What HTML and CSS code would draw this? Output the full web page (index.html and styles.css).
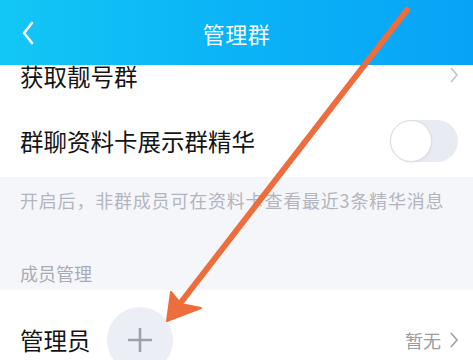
FILE: index.html
```html
<!DOCTYPE html>
<html lang="zh">
<head>
<meta charset="utf-8">
<link rel="stylesheet" href="styles.css">
</head>
<body>
<div class="page">
  <header class="header">
    <div class="back">
      <svg width="14" height="24" viewBox="0 0 14 24"><path d="M11 2 L3 12 L11 22" fill="none" stroke="#ffffff" stroke-width="2.6" stroke-linecap="round" stroke-linejoin="round"/></svg>
    </div>
    <div class="title">管理群</div>
    <div></div>
  </header>
  <div class="row row-top">
    <span class="label">获取靓号群</span>
    <svg class="chev" width="10" height="16" viewBox="0 0 10 16"><path d="M2 1 L8 8 L2 15" fill="none" stroke="#c6c7cc" stroke-width="1.8"/></svg>
  </div>
  <div class="row row-toggle">
    <span class="label">群聊资料卡展示群精华</span>
    <div class="toggle"><div class="knob"></div></div>
  </div>
  <section class="gray">
    <div class="caption">开启后，非群成员可在资料卡查看最近3条精华消息</div>
    <div class="section-title">成员管理</div>
  </section>
  <div class="row row-admin">
    <span class="label">管理员</span>
    <div class="plus">
      <svg width="26" height="26" viewBox="0 0 26 26"><path d="M13 1 V25 M1 13 H25" stroke="#9d9fab" stroke-width="2.6"/></svg>
    </div>
    <div class="spacer"></div>
    <span class="none">暂无</span>
    <svg class="chev2" width="10" height="16" viewBox="0 0 10 16"><path d="M2 1 L8 8 L2 15" fill="none" stroke="#a5a6ad" stroke-width="1.8"/></svg>
  </div>
  <svg class="arrow" width="473" height="360" viewBox="0 0 473 360">
    <line x1="407" y1="10" x2="182" y2="301" stroke="#ee6d3d" stroke-width="6" stroke-linecap="round"/>
    <polygon points="167,321 171,292 181,304 201,308" fill="#ee6d3d" stroke="#ee6d3d" stroke-width="2" stroke-linejoin="round"/>
  </svg>
</div>
</body>
</html>
```
FILE: styles.css
```css
* { box-sizing: border-box; margin: 0; padding: 0; }
body {
  width: 473px;
  height: 360px;
  overflow: hidden;
  font-family: "Noto Sans CJK SC", "Noto Sans", sans-serif;
  background: #ffffff;
}
.page {
  position: relative;
  width: 473px;
  height: 360px;
  display: flex;
  flex-direction: column;
  overflow: hidden;
}
.header {
  height: 65px;
  flex: none;
  display: grid;
  grid-template-columns: 1fr auto 1fr;
  align-items: center;
  background: linear-gradient(90deg, #12c7f5 0%, #0bb3f6 50%, #07a4f6 100%);
  color: #ffffff;
}
.back { display: flex; align-items: center; height: 24px; padding-left: 21px; }
.title { font-size: 22px; line-height: 30px; letter-spacing: 0.5px; color: #f2fbff; }
.row {
  display: flex;
  align-items: center;
  padding: 0 14px 0 20px;
  background: #ffffff;
  flex: none;
}
.label { font-size: 23.5px; color: #141414; }
.row-top {
  height: 40px;
  align-items: flex-start;
  justify-content: space-between;
}
.row-top .label { line-height: 22px; }
.row-top .chev { margin-top: 2px; }
.row-toggle {
  height: 72px;
  justify-content: space-between;
  padding-right: 15px;
}
.toggle {
  width: 68px;
  height: 42px;
  border-radius: 21px;
  background: #e9ebf2;
  display: flex;
  align-items: center;
}
.knob {
  width: 42px;
  height: 42px;
  border-radius: 50%;
  background: #ffffff;
  border: 1.5px solid #dcdde3;
  box-shadow: 0 1px 2px rgba(0,0,0,0.05);
}
.gray {
  height: 113px;
  flex: none;
  background: #f5f6fa;
  padding: 11px 20px 0 20px;
}
.caption {
  font-size: 18px;
  line-height: 24px;
  letter-spacing: 0.8px;
  color: #b3b5be;
  white-space: nowrap;
}
.section-title {
  margin-top: 49px;
  font-size: 18px;
  line-height: 24px;
  color: #a9abb4;
}
.row-admin {
  height: 100px;
}
.plus {
  width: 66px;
  height: 66px;
  border-radius: 50%;
  background: #eceef5;
  display: flex;
  align-items: center;
  justify-content: center;
  margin-left: 16px;
}
.spacer { flex: 1; }
.none { font-size: 18px; color: #9a9ba3; margin-right: 8px; }
.arrow { position: absolute; left: 0; top: 0; pointer-events: none; }
```
